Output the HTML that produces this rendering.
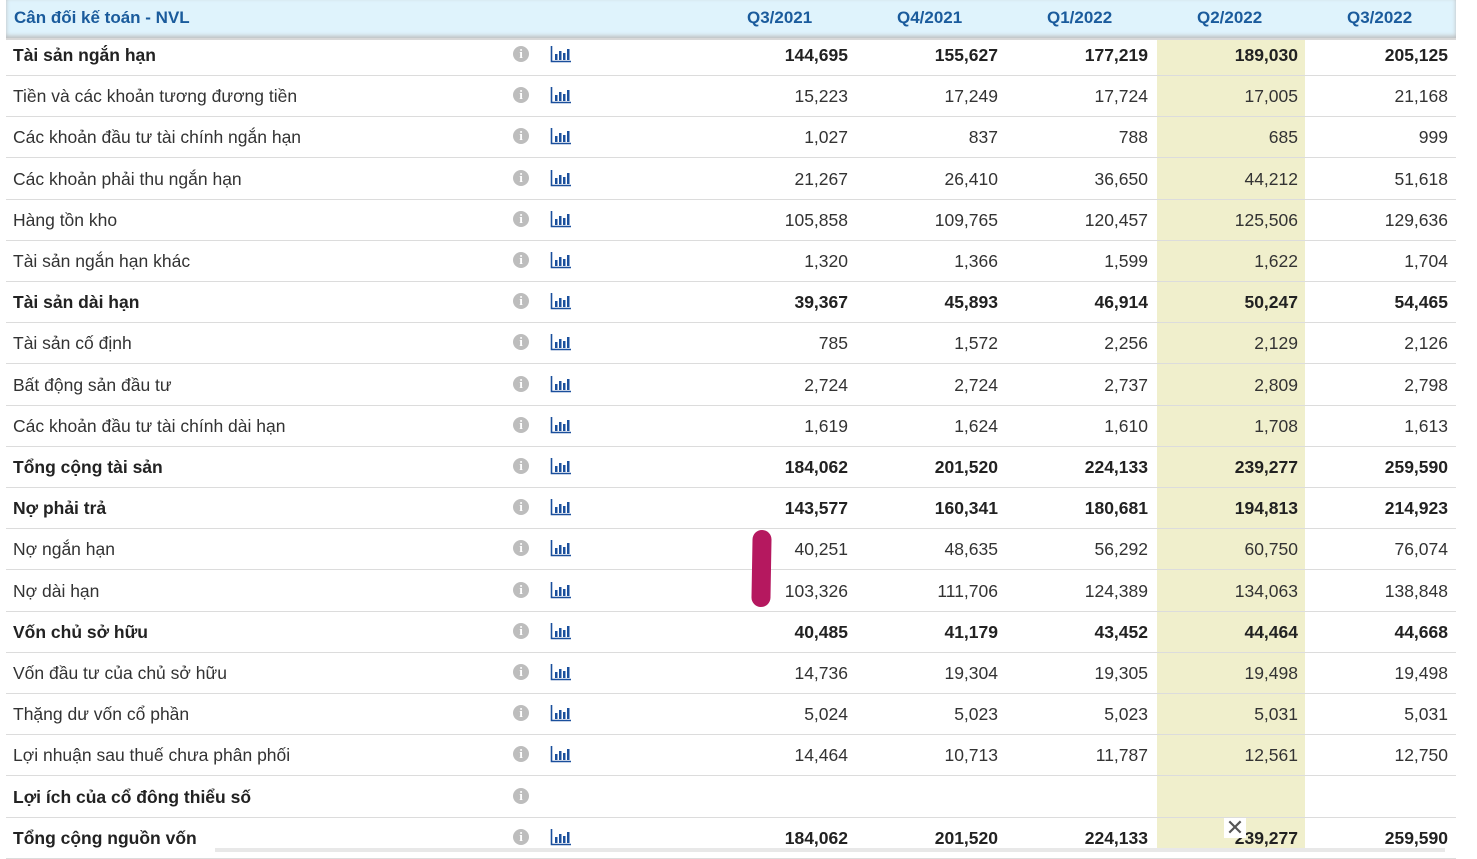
<!DOCTYPE html>
<html><head><meta charset="utf-8"><style>
body{margin:0;width:1477px;height:852px;overflow:hidden;background:#fff;font-family:"Liberation Sans",Arial,sans-serif;position:relative}
.hdr{position:absolute;left:6px;top:0;width:1450px;height:38px;background:#dff3fc;border-bottom:2px solid #d8d8d8;box-shadow:0 -2px 4px #bbb inset}
.hdr span{position:absolute;top:8px;font-size:17px;font-weight:bold;color:#1a5b9c}
.hl{position:absolute;left:1157px;top:40px;width:148px;height:812px;background:#f0efcc}
.r{position:absolute;left:6px;width:1450px;height:40px;border-bottom:1px solid #dcdcdc;font-size:17.5px;color:#333}
.r .l{position:absolute;left:7px;top:10px}
.r.b{font-weight:bold;color:#222}
.r .v{position:absolute;top:10px;width:140px;text-align:right}
.i{position:absolute;left:507px;top:11px;width:16px;height:16px;border-radius:50%;background:#bdbdbd;color:#fff;font:bold 13px "Liberation Serif",serif;text-align:center;line-height:16px}
.c{position:absolute;left:544px;top:11px}
</style></head><body>
<div class="hl"></div>
<div class="hdr">
<span style="left:8px">Cân đối kế toán - NVL</span>
<span style="left:741px">Q3/2021</span>
<span style="left:891px">Q4/2021</span>
<span style="left:1041px">Q1/2022</span>
<span style="left:1191px">Q2/2022</span>
<span style="left:1341px">Q3/2022</span>
</div>
<div id="rows"></div>
<script>
var d=[
["Tài sản ngắn hạn",1,"144,695","155,627","177,219","189,030","205,125"],
["Tiền và các khoản tương đương tiền",0,"15,223","17,249","17,724","17,005","21,168"],
["Các khoản đầu tư tài chính ngắn hạn",0,"1,027","837","788","685","999"],
["Các khoản phải thu ngắn hạn",0,"21,267","26,410","36,650","44,212","51,618"],
["Hàng tồn kho",0,"105,858","109,765","120,457","125,506","129,636"],
["Tài sản ngắn hạn khác",0,"1,320","1,366","1,599","1,622","1,704"],
["Tài sản dài hạn",1,"39,367","45,893","46,914","50,247","54,465"],
["Tài sản cố định",0,"785","1,572","2,256","2,129","2,126"],
["Bất động sản đầu tư",0,"2,724","2,724","2,737","2,809","2,798"],
["Các khoản đầu tư tài chính dài hạn",0,"1,619","1,624","1,610","1,708","1,613"],
["Tổng cộng tài sản",1,"184,062","201,520","224,133","239,277","259,590"],
["Nợ phải trả",1,"143,577","160,341","180,681","194,813","214,923"],
["Nợ ngắn hạn",0,"40,251","48,635","56,292","60,750","76,074"],
["Nợ dài hạn",0,"103,326","111,706","124,389","134,063","138,848"],
["Vốn chủ sở hữu",1,"40,485","41,179","43,452","44,464","44,668"],
["Vốn đầu tư của chủ sở hữu",0,"14,736","19,304","19,305","19,498","19,498"],
["Thặng dư vốn cổ phần",0,"5,024","5,023","5,023","5,031","5,031"],
["Lợi nhuận sau thuế chưa phân phối",0,"14,464","10,713","11,787","12,561","12,750"],
["Lợi ích của cổ đông thiểu số",1,"","","","",""],
["Tổng cộng nguồn vốn",1,"184,062","201,520","224,133","239,277","259,590"]];
var chart='<svg class="c" width="22" height="17" viewBox="0 0 22 17"><path d="M1.5 0V15.5H21" stroke="#1a4f9c" stroke-width="1.6" fill="none"/><rect x="5" y="8" width="2.5" height="6" fill="#1a4f9c"/><rect x="9" y="5" width="2.5" height="9" fill="#1a4f9c"/><rect x="13" y="7" width="2.5" height="7" fill="#1a4f9c"/><rect x="17" y="3" width="2.5" height="11" fill="#1a4f9c"/></svg>';
var h='';
for(var i=0;i<d.length;i++){var r=d[i];var t=Math.round(35+41.2*i);
h+='<div class="r'+(r[1]?' b':'')+'" style="top:'+t+'px"><span class="l">'+r[0]+'</span><span class="i">i</span>'+(i==18?'':chart);
for(var k=0;k<5;k++)h+='<span class="v" style="left:'+(702+150*k)+'px">'+r[2+k]+'</span>';
h+='</div>';}
document.getElementById('rows').innerHTML=h;
</script>
<div style="position:absolute;left:752px;top:530px;width:19px;height:77px;border-radius:10px;background:#b5185f;transform:rotate(1deg)"></div>
<div style="position:absolute;left:1224px;top:818px;width:22px;height:20px;background:#fff;color:#555;font-size:22px;line-height:20px;text-align:center">✕</div>
<div style="position:absolute;left:215px;top:848px;width:1230px;height:4px;background:#e8e8e8"></div>
</body></html>
